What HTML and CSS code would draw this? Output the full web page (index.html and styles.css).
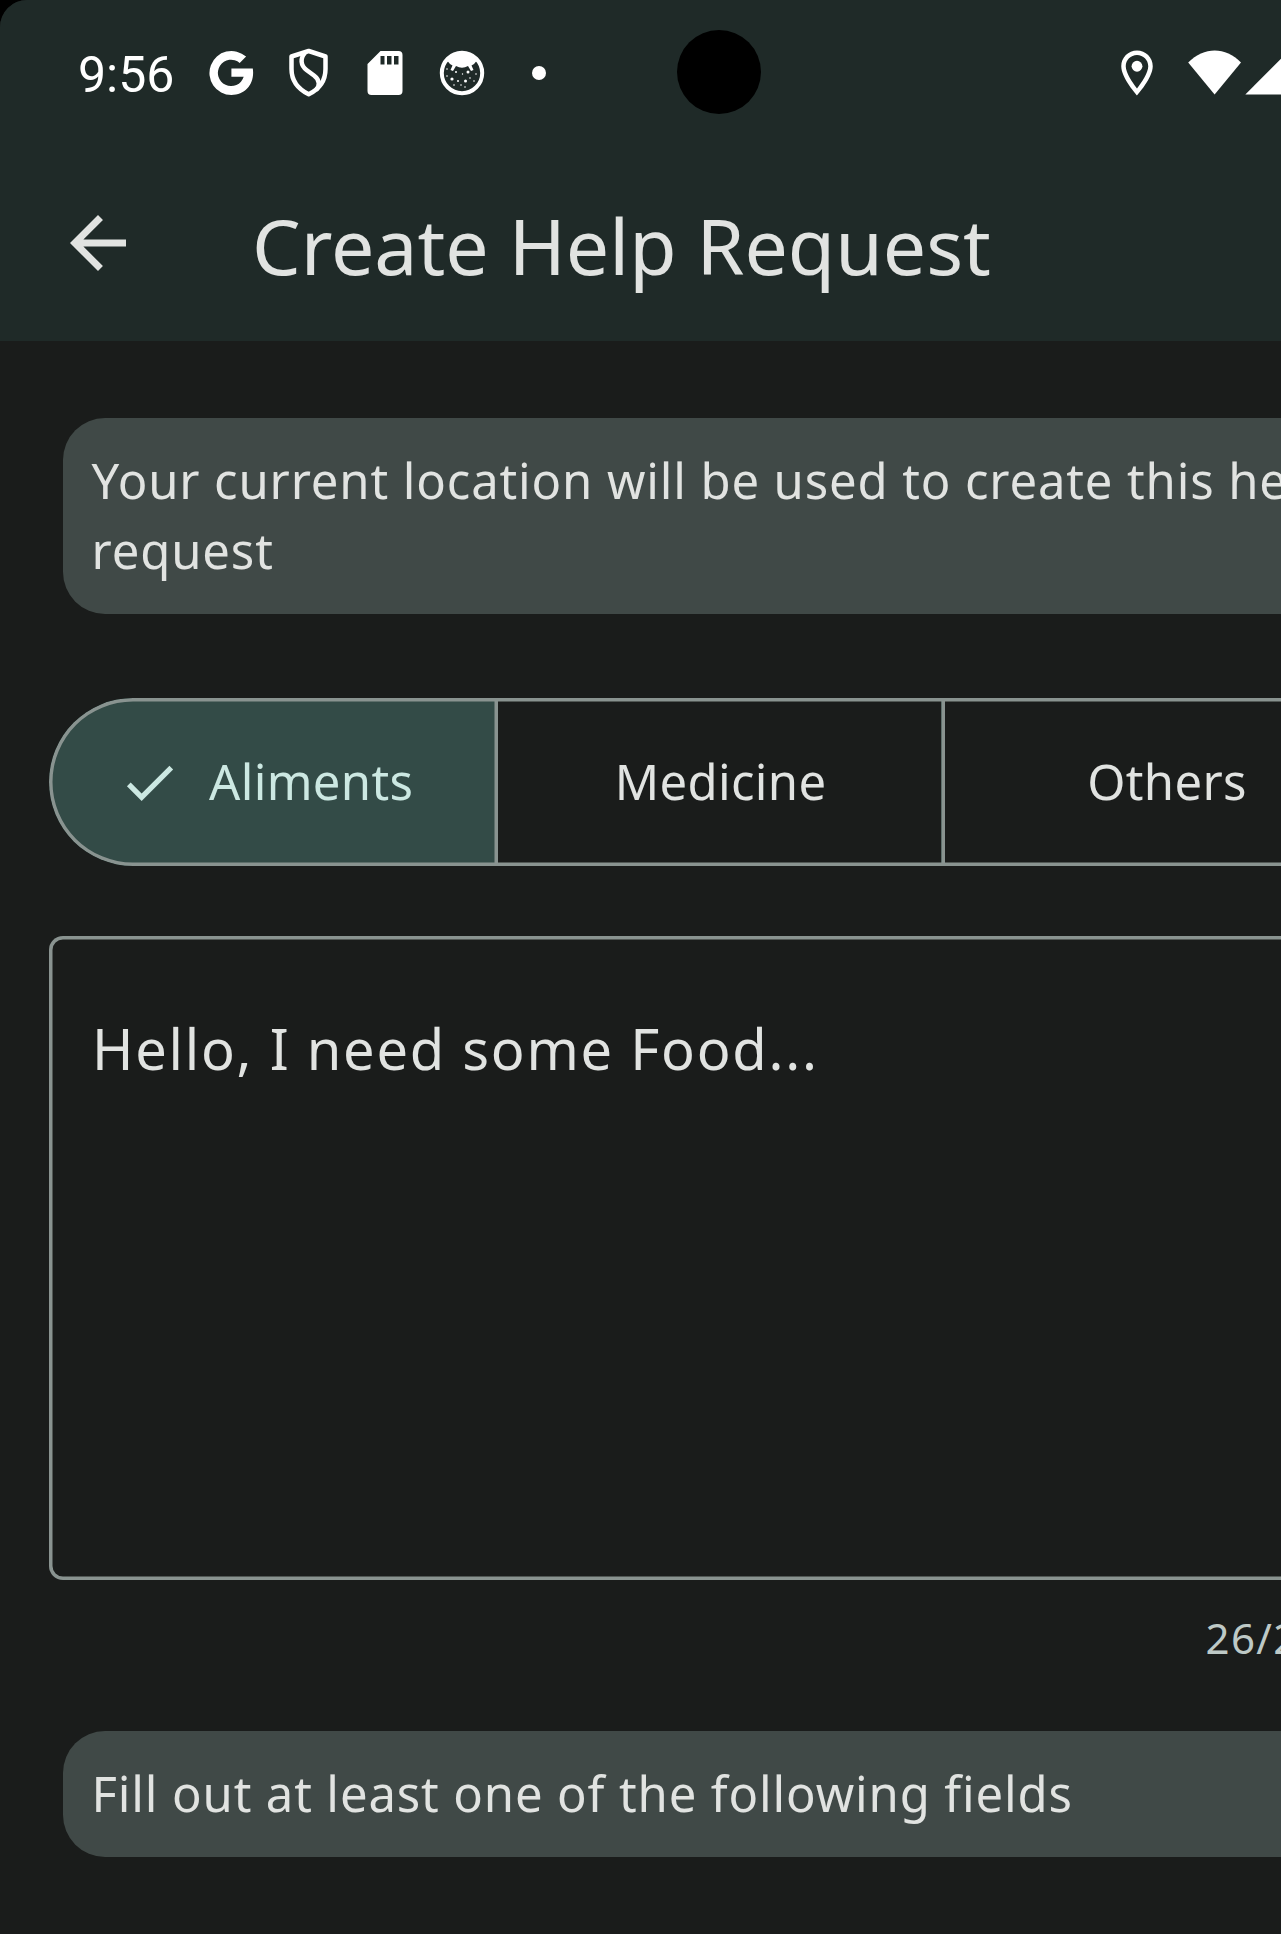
FILE: index.html
```html
<!DOCTYPE html>
<html lang="en">
<head>
<meta charset="utf-8">
<title>Create Help Request</title>
<link rel="stylesheet" href="styles.css">
</head>
<body>
<div class="screen">
  <header class="top">
    <div class="status">
      <div class="status-left">
        <span class="clock">9:56</span>
        <svg class="icon-g" width="46" height="46" viewBox="0 0 46 46"><path fill="#fff" d="M37.100 6.600 30.700 12.900A13.200 13.200 0 1 0 34.700 26.800H22.400V18.600H43.800C46 33 37 45 22.400 45A22 22 0 1 1 37.100 6.600Z"/></svg>
        <svg class="icon-shield" width="42" height="50" viewBox="0 0 42 50" fill="none" stroke="#fff" stroke-width="4.500" stroke-linejoin="round"><path d="M20.700 3 37.500 8.500V21C37.500 33 30.500 41.500 20.700 46.300 11 41.500 3.500 33 3.500 21V8.500Z"/><path d="M17 5C12 10 12.500 17.500 18.500 22L26 27.500C32 32 32 38 28 42"/></svg>
        <svg class="icon-sd" width="36" height="46" viewBox="0 0 36 46"><path fill="#fff" fill-rule="evenodd" d="M13.500 1H31.500A4 4 0 0 1 35.500 5V41A4 4 0 0 1 31.500 45H4.500A4 4 0 0 1 .5 41V14ZM13.500 6V14.500H17.500V6ZM20 6V14.500H24.500V6ZM27 6V14.500H31.500V6Z"/></svg>
        <svg class="icon-round" width="46" height="46" viewBox="0 0 46 46"><circle cx="23" cy="23" r="20.200" fill="none" stroke="#fff" stroke-width="4"/><path fill="#fff" d="M8.500 11C14 0 32 0 37.500 11L35 14 32.500 15.500 34.500 20 32 21 29 16Q23 19.500 17 16L14 21 11.500 20 13.500 15.500 11 14Z"/><g fill="#fff"><circle cx="13" cy="29" r="1.600"/><circle cx="26.500" cy="31" r="1.500"/><circle cx="29" cy="22" r="1.500"/><circle cx="19" cy="31" r="1"/><circle cx="31" cy="28" r=".8"/><circle cx="22" cy="35" r=".8"/><circle cx="15" cy="35" r=".8"/><circle cx="26" cy="37" r=".8"/><circle cx="8" cy="26" r=".8"/><circle cx="8" cy="19" r=".8"/><circle cx="17" cy="22" r="1"/><circle cx="23.500" cy="24" r=".7"/><circle cx="37" cy="24" r=".8"/><circle cx="35" cy="31" r=".8"/></g></svg>
        <span class="more-dot"></span>
      </div>
      <div class="status-right">
        <svg class="icon-pin" width="54" height="54" viewBox="0 0 24 24" fill="#fff"><path d="M12 2C8.130 2 5 5.130 5 9c0 5.250 7 13 7 13s7-7.750 7-13c0-3.870-3.130-7-7-7zM7 9c0-2.760 2.240-5 5-5s5 2.240 5 5c0 2.880-2.880 7.190-5 9.880C9.920 16.210 7 11.850 7 9z"/><circle cx="12" cy="9" r="2.400"/></svg>
        <svg class="icon-wifi" width="54" height="46" viewBox="0 0 54 46"><path fill="#fff" d="M.2 12.500C16-3.600 37.500-3.600 53 12.500L26.600 44.600Z"/></svg>
        <svg class="icon-cell" width="46" height="46" viewBox="0 0 46 46"><path fill="#fff" d="M.3 44.500 44.500.3V44.500Z"/></svg>
      </div>
      <span class="camera"></span>
    </div>
    <div class="appbar">
      <svg class="back" width="84" height="84" viewBox="0 0 24 24" fill="#e1e3e1"><path d="M20 11H7.830l5.590-5.590L12 4l-8 8 8 8 1.410-1.410L7.830 13H20v-2z"/></svg>
      <h1 class="title">Create Help Request</h1>
    </div>
  </header>
  <main class="content">
    <p class="note">Your current location will be used to create this help request</p>
    <div class="segments">
      <div class="segment selected">
        <svg width="63" height="63" viewBox="0 0 24 24" fill="#cce8e2"><path d="M9 16.170 4.830 12l-1.420 1.410L9 19 21 7l-1.410-1.410z"/></svg>
        <span>Aliments</span>
      </div>
      <div class="segment">Medicine</div>
      <div class="segment">Others</div>
    </div>
    <div class="field">Hello, I need some Food...</div>
    <div class="counter">26/2</div>
    <p class="note">Fill out at least one of the following fields</p>
  </main>
</div>
</body>
</html>
```
FILE: styles.css
```css
* { box-sizing: border-box; }

body {
  margin: 0;
  background: #000;
  font-family: "Noto Sans", sans-serif;
  color: #e1e3e1;
}

.screen {
  width: 100%;
  height: 1934px;
  overflow: hidden;
  border-top-left-radius: 27px;
  background: #1a1c1b;
}

.top {
  width: 1440px;
  height: 341px;
  background: #1f2a28;
}

.status {
  position: relative;
  display: flex;
  height: 145px;
  color: #fff;
}

.status svg { display: block; flex: none; }

.status-left,
.status-right {
  display: flex;
  align-items: center;
  height: 146px;
}

.status-left { width: 1109px; padding-left: 78px; }

.clock {
  width: 131px;
  font: 400 50px/58px Roboto, sans-serif;
  padding-top: 4px;
}

.icon-shield { margin-left: 33px; }
.icon-sd { margin-left: 37px; }
.icon-round { margin-left: 36px; }

.more-dot {
  width: 14px;
  height: 14px;
  margin-left: 47px;
  border-radius: 50%;
  background: #fff;
}

.icon-pin { margin-left: 1px; }
.icon-wifi { margin-left: 24px; }
.icon-cell { margin-left: 3px; }

.camera {
  position: absolute;
  left: 677px;
  top: 30px;
  width: 84px;
  height: 84px;
  border-radius: 50%;
  background: #000;
}

.appbar {
  display: flex;
  align-items: center;
  height: 196px;
  padding-left: 56px;
}

.title {
  margin: 6px 0 0 112px;
  font-size: 77px;
  font-weight: 400;
  line-height: 98px;
}

.content {
  display: flex;
  flex-direction: column;
  width: 1440px;
  padding: 77px 49px 0;
}

.note {
  margin: 0 14px;
  padding: 27px 27px 29px 28.5px;
  border-radius: 42px;
  background: #404947;
  font-size: 49px;
  line-height: 70px;
  letter-spacing: 0.875px;
}

.segments {
  display: grid;
  grid-template-columns: 449px 447px 446px;
  height: 168px;
  margin-top: 84px;
  border-radius: 84px;
  overflow: hidden;
  position: relative;
}

.segments::after {
  content: "";
  position: absolute;
  inset: 0;
  border-radius: 84px;
  box-shadow: inset 0 0 0 3.5px #899390;
}

.segment {
  display: flex;
  align-items: center;
  justify-content: center;
  padding: 0 2px 2px 0;
  font-size: 49px;
  line-height: 70px;
  letter-spacing: 0.35px;
}

.segment:not(:last-child) {
  background-image: linear-gradient(to left, #899390 3px, #5e6f6b 3px 4px, transparent 4px);
}

.segment.selected {
  justify-content: flex-start;
  gap: 28px;
  padding-left: 69px;
  background-color: #334b47;
  color: #cce8e2;
}

.segment.selected svg { margin-top: 2px; }

.field {
  height: 644px;
  margin-top: 70px;
  padding: 70px 42px 70px 43px;
  border-radius: 14px;
  box-shadow: inset 0 0 0 3.5px #899390;
  font-size: 56px;
  line-height: 84px;
  letter-spacing: 1.75px;
}

.counter {
  height: 151px;
  padding: 30px 0 0 1156.5px;
  color: #bec9c6;
  font-size: 42px;
  line-height: 56px;
  letter-spacing: 1.4px;
}
```
